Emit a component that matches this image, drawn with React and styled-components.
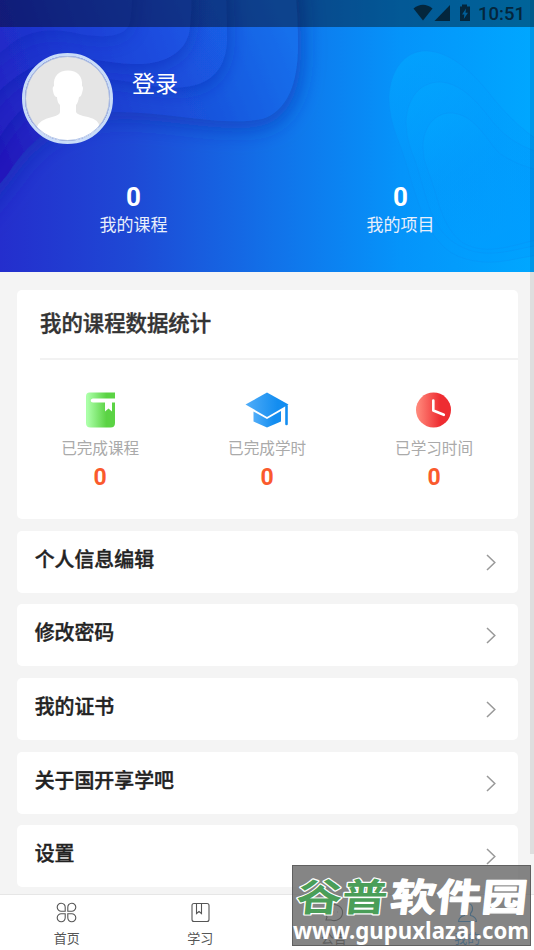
import React from "react";
import styled, { createGlobalStyle } from "styled-components";

const GlobalStyle = createGlobalStyle`
  * {
    box-sizing: border-box;
  }
  body {
    margin: 0;
    background: #f4f4f4;
    font-family: Roboto, "Noto Sans CJK SC", sans-serif;
  }
`;

const Screen = styled.div`
  position: relative;
  display: flex;
  flex-direction: column;
  width: 534px;
  height: 950px;
  overflow: hidden;
  background: #f4f4f4;
`;

const Header = styled.header`
  display: grid;
  flex: none;
  height: 272px;
  > * {
    grid-area: 1 / 1;
  }
`;

const HeaderContent = styled.div`
  z-index: 1;
  color: white;
`;

const StatusBar = styled.div`
  display: flex;
  align-items: center;
  justify-content: flex-end;
  height: 27px;
  padding: 1px 9px 0 0;
  background: rgba(0, 0, 0, 0.4);
  color: #04263c;
  font-size: 18.5px;
  font-weight: 500;
  svg {
    margin: -2px 7px 0 0;
  }
`;

const Profile = styled.div`
  display: flex;
  padding: 26px 0 0 22px;
`;

const Avatar = styled.div`
  width: 91px;
  height: 91px;
  border: 3px solid #c9dcf8;
  border-radius: 50%;
  overflow: hidden;
  svg {
    display: block;
  }
`;

const LoginLink = styled.div`
  margin: 15px 0 0 19px;
  font-size: 23px;
  line-height: 34px;
`;

const Counters = styled.div`
  display: flex;
  margin-top: 38px;
`;

const Counter = styled.div`
  flex: 1;
  text-align: center;
  color: #e9effb;
  font-size: 17px;
  line-height: 26px;
  strong {
    display: block;
    color: white;
    font-size: 26px;
    line-height: 30px;
  }
`;

const Content = styled.main`
  display: flex;
  flex: 1;
  flex-direction: column;
  gap: 11.6px;
  min-height: 0;
  padding: 17.5px 16.5px 0 16.7px;
  overflow: hidden;
`;

const Card = styled.section`
  flex: none;
  height: 229.5px;
  border-radius: 5px;
  background: white;
`;

const CardTitle = styled.h2`
  height: 70px;
  margin: 0 0 0 23.3px;
  border-bottom: 2px solid #f2f2f2;
  color: #333;
  font-size: 21.4px;
  font-weight: 500;
  line-height: 67px;
  -webkit-text-stroke: 0.4px #333;
`;

const Stats = styled.div`
  display: flex;
`;

const Stat = styled.div`
  display: flex;
  flex: 1;
  flex-direction: column;
  align-items: center;
  padding-top: 32px;
  color: #aaa;
  font-size: 15.6px;
  line-height: 24px;
  svg {
    margin-bottom: 9px;
  }
  strong {
    margin-top: 3px;
    color: #fa5a2d;
    font-size: 23px;
    font-weight: 700;
    line-height: 28px;
  }
`;

const MenuRow = styled.div`
  display: flex;
  flex: none;
  align-items: center;
  justify-content: space-between;
  height: 62.1px;
  padding: 0 21px 0 18px;
  border-radius: 5px;
  background: white;
  color: #222;
  font-size: 19.9px;
  font-weight: 500;
  -webkit-text-stroke: 0.4px #222;
  span {
    line-height: 30px;
    padding-bottom: 2px;
  }
`;

const TabBar = styled.nav`
  display: flex;
  flex: none;
  height: 56px;
  border-top: 1px solid #e6e6e6;
  background: white;
`;

const Tab = styled.div`
  display: flex;
  flex: 1;
  flex-direction: column;
  align-items: center;
  padding-top: 7px;
  color: ${(props) => (props.$active ? "#1590e8" : "#555")};
  font-size: 13px;
  line-height: 20px;
  svg {
    margin-bottom: 6px;
  }
`;

const ScrollThumb = styled.div`
  position: absolute;
  top: 0;
  right: 0;
  width: 4px;
  height: 854px;
  background: rgba(0, 0, 0, 0.09);
`;

const Watermark = styled.div`
  position: absolute;
  left: 292px;
  top: 865px;
  width: 239px;
  height: 81px;
  border: 1px solid rgba(60, 60, 60, 0.5);
  background: rgba(96, 96, 96, 0.77);
  svg {
    display: block;
    margin: -1px;
    overflow: visible;
  }
`;

function Waves() {
  return (
    <svg width="534" height="272" viewBox="0 0 534 272">
      <defs>
        <linearGradient id="base">
          <stop offset="0" stopColor="#242ecd" />
          <stop offset="0.25" stopColor="#1e49d5" />
          <stop offset="0.5" stopColor="#1270e8" />
          <stop offset="0.75" stopColor="#0594fa" />
          <stop offset="1" stopColor="#00a7ff" />
        </linearGradient>
        <linearGradient id="wave" gradientUnits="userSpaceOnUse" x1="0" y1="150" x2="290" y2="30">
          <stop offset="0" stopColor="#2317bb" />
          <stop offset="0.25" stopColor="#1d36cc" />
          <stop offset="0.6" stopColor="#1a4fda" />
          <stop offset="1" stopColor="#1370ec" />
        </linearGradient>
        <linearGradient id="waveMid" gradientUnits="userSpaceOnUse" x1="0" y1="130" x2="225" y2="20">
          <stop offset="0" stopColor="#221fc0" />
          <stop offset="0.4" stopColor="#1c39cf" />
          <stop offset="1" stopColor="#195fe6" />
        </linearGradient>
        <linearGradient id="waveTop" gradientUnits="userSpaceOnUse" x1="0" y1="90" x2="190" y2="20">
          <stop offset="0" stopColor="#2126c5" />
          <stop offset="0.4" stopColor="#1d3cd3" />
          <stop offset="1" stopColor="#1b55e4" />
        </linearGradient>
        <linearGradient id="blob" x1="0" y1="0" x2="0.4" y2="1">
          <stop offset="0" stopColor="#02a6ff" stopOpacity="0.75" />
          <stop offset="0.55" stopColor="#029afc" stopOpacity="0.35" />
          <stop offset="1" stopColor="#009dff" stopOpacity="0.5" />
        </linearGradient>
        <filter id="shade" x="-20%" y="-20%" width="150%" height="170%">
          <feDropShadow dx="3" dy="7" stdDeviation="11" floodColor="#0d2cae" floodOpacity="0.6" />
        </filter>
        <filter id="shadeSmall" x="-20%" y="-20%" width="150%" height="170%">
          <feDropShadow dx="2" dy="5" stdDeviation="9" floodColor="#0d2cae" floodOpacity="0.4" />
        </filter>
      </defs>
      <rect width="534" height="272" fill="url(#base)" />
      <path
        fill="url(#wave)"
        filter="url(#shade)"
        d="M-30-30H292Q298 0 298 45C298 85 286 112 262 119C225 127 170 112 118 112C62 113 32 137 8 174L-30 220Z"
      />
      <path
        fill="url(#waveMid)"
        filter="url(#shadeSmall)"
        d="M-30-30H224Q227 0 227 40C226 68 212 84 185 87C153 91 125 77 95 79C50 82 18 103-5 145L-30 180Z"
      />
      <path
        fill="url(#waveTop)"
        filter="url(#shadeSmall)"
        d="M-30-30H190Q193 0 190 27C188 52 165 65 133 64C105 63 80 55 59 57C35 62 12 78-5 95L-30 130Z"
      />
      <path
        fill="url(#waveTop)"
        filter="url(#shadeSmall)"
        opacity="0.7"
        d="M-30-30H133Q133 0 130 22C126 38 103 38 80 34C47 26 24 31 5 49L-30 75Z"
      />
      <g fill="url(#blob)" stroke="#0a8cf0" strokeOpacity="0.35" strokeWidth="0.8">
        <path d="M389 98C390 70 405 50 427 51C451 52 472 72 489 93C504 112 520 129 545 145V255C520 255 498 268 466 259C421 248 415 182 398 140Q389 117 389 98Z" />
        <path d="M406 122C407 98 420 82 440 82C462 83 479 104 492 121C509 141 521 146 545 155V244C517 248 490 260 464 248C426 232 427 188 411 150Q406 137 406 122Z" />
        <path d="M423 147C423 126 436 112 452 113C475 115 485 138 499 153Q515 165 545 172V238C514 244 489 257 463 243C440 226 438 195 428 171Q423 160 423 147Z" />
      </g>
    </svg>
  );
}

function StatusIcons() {
  return (
    <svg width="58" height="18" viewBox="0 0 58 18" fill="#04263c">
      <path d="M0.5 4.5Q10 -3 19.5 4.5L10 16.5Z" />
      <path d="M37 1V17H21.5Z" />
      <path
        fillRule="evenodd"
        d="M47 2.5H49V.5H54V2.5H57V17H47ZM53 4.5L49 10.5H51.3L50.8 15L55 8.7H52.5Z"
      />
    </svg>
  );
}

function Person() {
  return (
    <svg width="85" height="85" viewBox="0 0 85 85">
      <rect width="85" height="85" fill="#e5e5e5" />
      <path
        fill="white"
        d="M29 30C28 20 34 14.5 43 14.5S58 20 57 30Q59 31 57 37Q56 41 54 41Q53 47 51 49V56Q52 59 63 61Q75 64 74 71L65 84H20L12 71Q14 64 27 61Q35 59 35 56V49Q32 46 32 41Q29 41 28 35Q27 31 29 30Z"
      />
      <circle cx="42.5" cy="42.5" r="42" fill="none" stroke="#8faade" strokeWidth="0.7" />
    </svg>
  );
}

function BookIcon() {
  return (
    <svg width="36" height="36" viewBox="0 0 36 36">
      <defs>
        <linearGradient id="green">
          <stop offset="0.05" stopColor="#abffa8" />
          <stop offset="0.7" stopColor="#5bd344" />
        </linearGradient>
      </defs>
      <path
        fill="url(#green)"
        d="M7.5 .5H33V6.5H11C8 6.5 8 10.5 11 10.5H23V19.5L26.5 16.5L30 19.5V10.5H33V31Q33 35.5 28.5 35.5H8.5Q4 35.5 4 31V4.5Q4 .5 7.5 .5Z"
      />
    </svg>
  );
}

function CapIcon() {
  return (
    <svg width="44" height="36" viewBox="0 0 44 36">
      <defs>
        <linearGradient id="blue">
          <stop offset="0" stopColor="#51adf8" />
          <stop offset="0.75" stopColor="#138df0" />
        </linearGradient>
      </defs>
      <g fill="url(#blue)">
        <path d="M22 .5L43.5 12.5L22 25L.5 12.5Z" />
        <path d="M8.5 19.5L22 27L36 19V29.5L22 35.5L8.5 29.5Z" />
      </g>
      <path d="M41.5 14V32" stroke="#138df0" strokeWidth="2.6" strokeLinecap="round" />
    </svg>
  );
}

function ClockIcon() {
  return (
    <svg width="36" height="36" viewBox="0 0 36 36">
      <defs>
        <linearGradient id="red">
          <stop offset="0.05" stopColor="#ff8679" />
          <stop offset="0.7" stopColor="#ee2c31" />
        </linearGradient>
      </defs>
      <circle cx="17.5" cy="18" r="17.5" fill="url(#red)" />
      <path
        d="M17.3 8.5V18.5L27.8 22.8"
        fill="none"
        stroke="white"
        strokeWidth="2.6"
        strokeLinecap="round"
        strokeLinejoin="round"
      />
    </svg>
  );
}

function Chevron() {
  return (
    <svg width="12" height="18" viewBox="0 0 12 18" fill="none" stroke="#999" strokeWidth="1.5">
      <path d="M2 2L9.8 9.5L2 17" />
    </svg>
  );
}

const tabPaths = {
  home: "M9.2 9.2H5.4A4 4 0 1 1 9.2 5.4ZM11.8 9.2V5.4A4 4 0 1 1 15.6 9.2ZM9.2 11.8V15.6A4 4 0 1 1 5.4 11.8ZM11.8 11.8H15.6A4 4 0 1 1 11.8 15.6Z",
  study: "M4 1.5H17Q19 1.5 19 3.5V17.5Q19 19.5 17 19.5H4Q2 19.5 2 17.5V3.5Q2 1.5 4 1.5ZM6.5 1.5V11.5L9 9.5L11.5 11.5V1.5",
  notice: "M3 18L4 15A8.5 8 0 1 1 8 18ZM7 10H7.5M10.5 10H11M14 10H14.5",
  mine: "M1.5 19.5C2 15 5 14 7.5 13.5V11.5C4 8 5 1.5 10.5 1.5S17 8 13.5 11.5V13.5C16 14 19 15 19.5 19.5Z",
};

function TabIcon({ name }) {
  return (
    <svg width="21" height="21" viewBox="0 0 21 21" fill="none" stroke="currentColor" strokeWidth="1.1">
      <path d={tabPaths[name]} />
    </svg>
  );
}

const stats = [
  { label: "已完成课程", icon: <BookIcon /> },
  { label: "已完成学时", icon: <CapIcon /> },
  { label: "已学习时间", icon: <ClockIcon /> },
];

const menu = ["个人信息编辑", "修改密码", "我的证书", "关于国开享学吧", "设置"];

const tabs = [
  { name: "home", label: "首页" },
  { name: "study", label: "学习" },
  { name: "notice", label: "公告" },
  { name: "mine", label: "我的" },
];

export default function App() {
  return (
    <Screen>
      <GlobalStyle />
      <Header>
        <Waves />
        <HeaderContent>
          <StatusBar>
            <StatusIcons />
            10:51
          </StatusBar>
          <Profile>
            <Avatar>
              <Person />
            </Avatar>
            <LoginLink>登录</LoginLink>
          </Profile>
          <Counters>
            <Counter>
              <strong>0</strong>
              我的课程
            </Counter>
            <Counter>
              <strong>0</strong>
              我的项目
            </Counter>
          </Counters>
        </HeaderContent>
      </Header>
      <Content>
        <Card>
          <CardTitle>我的课程数据统计</CardTitle>
          <Stats>
            {stats.map((stat) => (
              <Stat key={stat.label}>
                {stat.icon}
                {stat.label}
                <strong>0</strong>
              </Stat>
            ))}
          </Stats>
        </Card>
        {menu.map((item) => (
          <MenuRow key={item}>
            <span>{item}</span>
            <Chevron />
          </MenuRow>
        ))}
      </Content>
      <TabBar>
        {tabs.map((tab) => (
          <Tab key={tab.name} $active={tab.name === "mine"}>
            <TabIcon name={tab.name} />
            {tab.label}
          </Tab>
        ))}
      </TabBar>
      <ScrollThumb />
      <Watermark>
        <svg width="239" height="81" viewBox="0 0 239 81" fill="white">
          <g
            transform="translate(5 0) skewX(-6)"
            fontFamily="Noto Sans CJK SC, sans-serif"
            fontSize="38"
            fontWeight="700"
            stroke="white"
            paintOrder="stroke"
            strokeLinejoin="round"
          >
            <text x="3" y="46" textLength="91" lengthAdjust="spacingAndGlyphs" fill="#4a9e58" strokeWidth="2.4">
              谷普
            </text>
            <text x="97" y="46" textLength="137" lengthAdjust="spacingAndGlyphs" strokeWidth="1.2">
              软件园
            </text>
          </g>
          <text
            x="1"
            y="74"
            textLength="236"
            lengthAdjust="spacingAndGlyphs"
            fontFamily="Noto Sans, sans-serif"
            fontSize="23"
            fontWeight="700"
          >
            www.gupuxlazal.com
          </text>
        </svg>
      </Watermark>
    </Screen>
  );
}
